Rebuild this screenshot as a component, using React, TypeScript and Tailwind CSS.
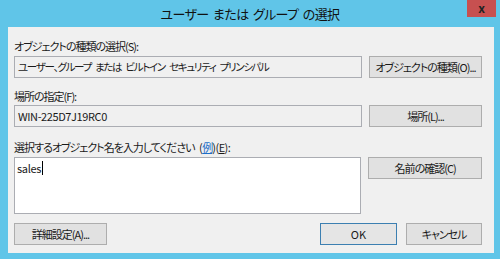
import { useState } from "react";

const font = "font-['Noto_Sans_CJK_JP','Noto_Sans',sans-serif] [font-feature-settings:'palt']";

function Btn({ label, primary = false, className = "" }: { label: React.ReactNode; primary?: boolean; className?: string }) {
  return (
    <button
      className={`flex h-[22px] items-center justify-center whitespace-nowrap border text-[11px] leading-none tracking-[-1px] text-[#1a1a1a] ${
        primary ? "border-[#3c7fb1] bg-[#e5e5e5]" : "border-[#adadad] bg-[#e1e1e1]"
      } ${className}`}
    >
      {label}
    </button>
  );
}

function ReadBox({ value, latin = false }: { value: string; latin?: boolean }) {
  return (
    <div
      className={`flex h-[22px] w-[348px] items-center whitespace-pre border border-[#abadb3] bg-[#f0f0f0] px-[3px] text-[#1a1a1a] ${
        latin ? "text-[11px] tracking-[-0.4px]" : "text-[10.5px] tracking-[-1.3px] [word-spacing:3px]"
      }`}
    >
      {value}
    </div>
  );
}

export default function App() {
  const [name] = useState("sales");

  return (
    <div className={`flex h-[259px] w-[500px] flex-col bg-[#60c5e8] ${font}`}>
      <div className="relative flex h-[27px] items-center justify-center whitespace-pre pt-[1px] text-[13px] tracking-[-0.6px] text-[#111] [word-spacing:2px]">
        ユーザー または グループ の選択
        <div className="absolute right-[4px] top-0 flex h-[17px] w-[29px] items-center justify-center bg-[#c75050] pb-[2px] text-[12px] font-bold leading-none tracking-normal text-[#222]">
          x
        </div>
      </div>

      <div className="ml-[8px] mr-[6px] flex h-[226px] flex-col bg-[#f0f0f0] pl-[6px] pr-[12px] text-[11px] tracking-[-1px] text-[#1a1a1a]">
        <div className="mt-[10px] h-[18px] leading-[18px]">オブジェクトの種類の選択(S):</div>
        <div className="mt-[1px] flex gap-[7px]">
          <ReadBox value="ユーザー、グループ または ビルトイン セキュリティ プリンシパル" />
          <Btn label="オブジェクトの種類(O)..." className="w-[113px]" />
        </div>

        <div className="mt-[9px] h-[18px] leading-[18px]">場所の指定(F):</div>
        <div className="flex gap-[7px]">
          <ReadBox value="WIN-225D7J19RC0" latin />
          <Btn label="場所(L)..." className="w-[113px]" />
        </div>

        <div className="mt-[11px] h-[18px] whitespace-pre leading-[18px] [word-spacing:3px]">
          選択するオブジェクト名を入力してください <span className="tracking-[-0.5px]">(</span><span className="text-[#1e6fc8] underline">例</span><span className="tracking-[-0.5px]">)(<span className="underline">E</span>):</span>
        </div>
        <div className="mt-[1px] flex items-start gap-[7px]">
          <div className="flex h-[57px] w-[348px] items-start border border-[#abadb3] bg-white px-[2px] pt-[2px] text-[11px] leading-[16px] tracking-[-0.3px]">
            <span>{name}</span>
            <span className="ml-[1px] mt-[1px] h-[14px] w-px bg-black" />
          </div>
          <Btn label="名前の確認(C)" className="w-[114px]" />
        </div>

        <div className="mt-[9px] flex items-center">
          <Btn label="詳細設定(A)..." className="w-[93px]" />
          <div className="flex-1" />
          <Btn label="OK" primary className="w-[77px] tracking-normal" />
          <Btn label="キャンセル" className="ml-[9px] w-[76px]" />
        </div>
      </div>
    </div>
  );
}
